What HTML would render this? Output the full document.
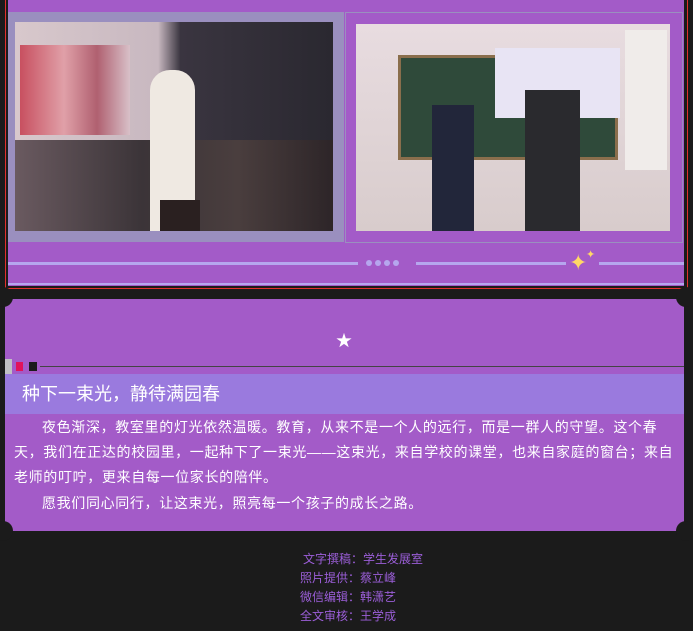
<!DOCTYPE html>
<html><head><meta charset="utf-8"><style>
*{margin:0;padding:0;box-sizing:border-box}
body{width:693px;height:631px;background:#1b1b1b;position:relative;overflow:hidden;font-family:"Liberation Sans","Noto Sans CJK SC",sans-serif}
.abs{position:absolute}
</style></head><body>
<div class="abs" style="left:5px;top:-2px;width:683px;height:291px;border:1px solid #e0302c"></div>
<div class="abs" style="left:8px;top:0;width:676px;height:286px;background:#a35bc8"></div>
<div class="abs" style="left:8px;top:12px;width:336px;height:230px;background:#9a8fbf"></div>
<div class="abs" style="left:15px;top:22px;width:318px;height:209px;background:linear-gradient(90deg,#d8c8cc 0%,#c8b8c0 45%,#3a3540 52%,#2a2830 100%)"></div>
<div class="abs" style="left:20px;top:45px;width:110px;height:90px;background:linear-gradient(90deg,#c85060,#e0a0a8 40%,#b06070 70%,#d8c0c8)"></div>
<div class="abs" style="left:15px;top:140px;width:318px;height:91px;background:linear-gradient(90deg,#6a5a60,#3b3438 40%,#4a3e3e 70%,#2d2528)"></div>
<div class="abs" style="left:150px;top:70px;width:45px;height:161px;background:#efe9e2;border-radius:20px 20px 0 0"></div>
<div class="abs" style="left:160px;top:200px;width:40px;height:31px;background:#2a2020"></div>
<div class="abs" style="left:345px;top:12px;width:338px;height:231px;border:1px solid #9a8fbf"></div>
<div class="abs" style="left:356px;top:24px;width:314px;height:207px;background:linear-gradient(180deg,#e8dce0 0%,#d8cccc 100%)"></div>
<div class="abs" style="left:398px;top:55px;width:220px;height:105px;background:#2f4a3a;border:3px solid #8a6e4c"></div>
<div class="abs" style="left:495px;top:48px;width:125px;height:70px;background:#e8e4f4"></div>
<div class="abs" style="left:625px;top:30px;width:42px;height:140px;background:#f0ecea"></div>
<div class="abs" style="left:432px;top:105px;width:42px;height:126px;background:#22263a"></div>
<div class="abs" style="left:525px;top:90px;width:55px;height:141px;background:#2a2a2e"></div>
<div class="abs" style="left:8px;top:262px;width:350px;height:3px;background:#b6a6ee"></div>
<div class="abs" style="left:366px;top:260px;width:6px;height:6px;border-radius:50%;background:#b6a6ee;box-shadow:9px 0 #b6a6ee,18px 0 #b6a6ee,27px 0 #b6a6ee"></div>
<div class="abs" style="left:416px;top:262px;width:150px;height:3px;background:#b6a6ee"></div>
<div class="abs" style="left:599px;top:262px;width:85px;height:3px;background:#b6a6ee"></div>
<div class="abs" style="left:569px;top:252px;color:#ffd866;font-size:22px;line-height:22px">✦</div>
<div class="abs" style="left:586px;top:250px;color:#ffd866;font-size:11px;line-height:11px">✦</div>
<div class="abs" style="left:8px;top:283px;width:676px;height:2px;background:#b6a6ee"></div>

<div class="abs" style="left:5px;top:299px;width:679px;height:232px;background:#a35bc8"></div>
<div class="abs" style="left:-7px;top:287px;width:20px;height:20px;border-radius:50%;background:#1b1b1b"></div>
<div class="abs" style="left:676px;top:287px;width:20px;height:20px;border-radius:50%;background:#1b1b1b"></div>
<div class="abs" style="left:-7px;top:521px;width:20px;height:20px;border-radius:50%;background:#1b1b1b"></div>
<div class="abs" style="left:676px;top:521px;width:20px;height:20px;border-radius:50%;background:#1b1b1b"></div>
<div class="abs" style="left:336px;top:327px;color:#fff;font-size:16px">★</div>
<div class="abs" style="left:5px;top:359px;width:7px;height:15px;background:#c0c0c4"></div>
<div class="abs" style="left:16px;top:362px;width:7px;height:9px;background:#e0135a"></div>
<div class="abs" style="left:29px;top:362px;width:8px;height:9px;background:#1b1b1b"></div>
<div class="abs" style="left:40px;top:366px;width:644px;height:1px;background:#444"></div>
<div class="abs" style="left:5px;top:374px;width:679px;height:40px;background:#9a7ade"></div>
<div class="abs" style="left:22px;top:382px;color:#fff;font-size:18px;line-height:24px">种下一束光，静待满园春</div>
<div class="abs" style="left:14px;top:415px;width:664px;color:#fff;font-size:14px;line-height:25px;letter-spacing:0.65px;text-indent:2em">
<p>夜色渐深，教室里的灯光依然温暖。教育，从来不是一个人的远行，而是一群人的守望。这个春天，我们在正达的校园里，一起种下了一束光——这束光，来自学校的课堂，也来自家庭的窗台；来自老师的叮咛，更来自每一位家长的陪伴。</p>
<p style="margin-top:1px">愿我们同心同行，让这束光，照亮每一个孩子的成长之路。</p>
</div>
<div class="abs" style="left:300px;top:550px;width:134px;color:#9b5ed8;font-size:12px;line-height:19px">
<div style="padding-left:3px">文字撰稿：学生发展室</div>
<div>照片提供：蔡立峰</div>
<div>微信编辑：韩潇艺</div>
<div>全文审核：王学成</div>
</div>
</body></html>
